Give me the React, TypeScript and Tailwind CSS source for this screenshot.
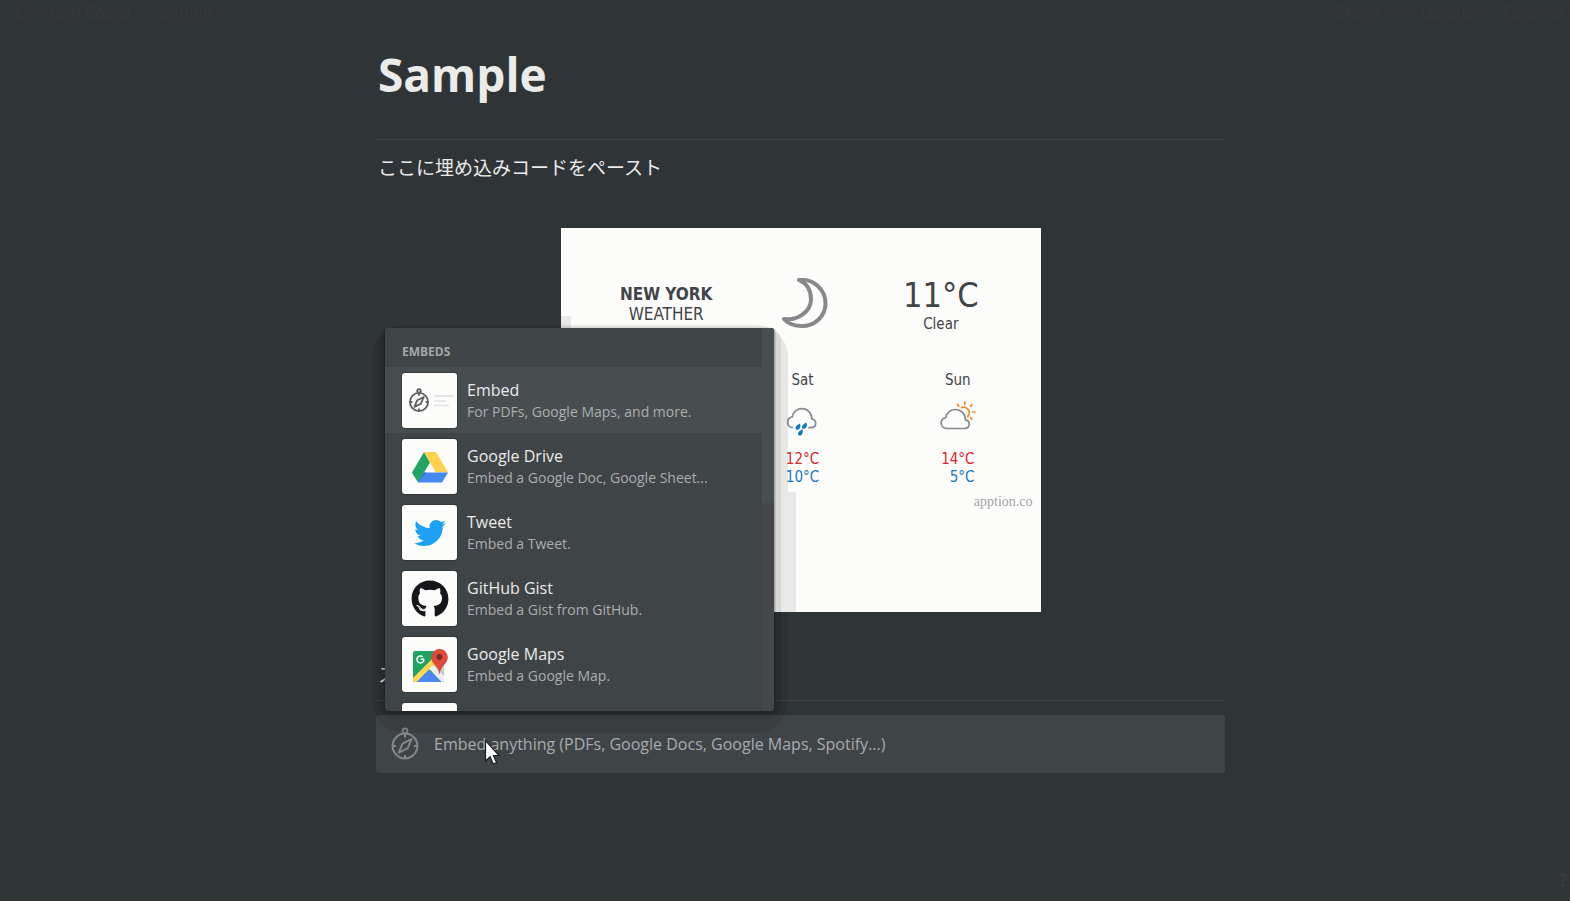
import type { ReactNode } from "react";
import { FaGithub, FaTwitter } from "react-icons/fa";
import { Check, Star } from "lucide-react";

function Compass({ className }: { className: string }) {
  return (
    <svg viewBox="0 0 30 34" className={className} fill="none" stroke="currentColor">
      <circle cx="15" cy="19" r="12.4" />
      <circle cx="15" cy="3.8" r="2.4" />
      <path d="M15 7v3.5M15 28v3.5M2.5 19H6M24 19h3.5" />
      <path d="M21.5 12.2 12.6 16.6 8.8 25.6 17.6 21.4Z" strokeLinejoin="round" />
    </svg>
  );
}

function EmbedPreview() {
  return (
    <div className="flex items-center gap-1 pl-[2px]">
      <Compass className="h-[25px] w-[22px] stroke-[2.5] text-[#5d6063]" />
      <svg viewBox="0 0 20 14" className="h-[14px] w-[20px]" fill="none" stroke="#dcdcdc">
        <path d="M0 2h20" strokeWidth="1.3" />
        <path d="M0 7h12M0 11.5h15" strokeWidth="1.6" stroke="#e2e2e2" />
      </svg>
    </div>
  );
}

function Drive() {
  return (
    <svg viewBox="0 0 36 32" className="h-[32px] w-[36px]">
      <path d="M12 1 18 11.5 6 31.5 0 21.5Z" fill="#1fa463" />
      <path d="M12 1h12l12 20.5H24Z" fill="#ffd14d" />
      <path d="M12 21.5h24l-6 10H6Z" fill="#4688f4" />
      <path d="M12 21.5 6 31.5 14.5 21.5Z" fill="#3567d6" />
    </svg>
  );
}

function Maps() {
  return (
    <svg viewBox="0 0 36 36" className="h-[36px] w-[36px]">
      <defs>
        <clipPath id="sheet">
          <rect x="1" y="4" width="31" height="31" rx="2" />
        </clipPath>
      </defs>
      <g clipPath="url(#sheet)">
        <rect x="1" y="4" width="31" height="31" fill="#1ea362" />
        <path d="M32 10v25L18 20Z" fill="#c9c9c9" />
        <path d="M-1 33 24 8l4 5L4 37Z" fill="#ffd84f" />
        <path d="M17 21.5 21 18 35 32v6h-3Z" fill="#eeeeee" />
        <path d="M4.5 35 17 22.5 29.500 35Z" fill="#4a89f3" />
      </g>
      <path d="M12 12.2H8.6M11.9 12.2a3.5 3.5 0 1 1-1.1-2.3" fill="none" stroke="#fff" strokeWidth="1.5" />
      <path d="M27.5 2a8.3 8.3 0 0 1 8.3 8.3c0 7.200-7.200 7.700-8.300 17.700-1.100-10-8.300-10.500-8.300-17.700A8.300 8.300 0 0 1 27.500 2Z" fill="#dc4b3e" />
      <circle cx="27.5" cy="10" r="3" fill="#7f2a22" />
    </svg>
  );
}

type Entry = { title: string; note: string; icon: ReactNode };

const entries: Entry[] = [
  { title: "Embed", note: "For PDFs, Google Maps, and more.", icon: <EmbedPreview /> },
  { title: "Google Drive", note: "Embed a Google Doc, Google Sheet...", icon: <Drive /> },
  { title: "Tweet", note: "Embed a Tweet.", icon: <FaTwitter className="size-8 text-[#1da1f2]" /> },
  { title: "GitHub Gist", note: "Embed a Gist from GitHub.", icon: <FaGithub className="size-[38px] text-[#17161a]" /> },
  { title: "Google Maps", note: "Embed a Google Map.", icon: <Maps /> },
];

function Thumb({ children }: { children?: ReactNode }) {
  return (
    <span className="flex size-[55px] shrink-0 items-center justify-center rounded-[3px] bg-[#fcfcfa] shadow-[0_0_0_1px_rgba(15,15,15,0.25)]">
      {children}
    </span>
  );
}

function EmbedMenu() {
  return (
    <>
      <div className="absolute bottom-[40px] -left-1 h-[408px] w-[416px] rounded-[32px] bg-black/8" />
      <div className="absolute bottom-[54px] left-[3px] h-[392px] w-[402px] rounded-[14px] bg-black/7" />
      <div className="absolute bottom-full left-[9px] z-10 mb-1 flex h-[383px] w-[389px] overflow-hidden rounded-[3px] bg-[#3f4447] shadow-[0_1px_0_1px_rgba(15,15,15,0.16),0_2px_0_2px_rgba(15,15,15,0.10)]">
        <div className="min-w-0 flex-1">
          <h2 className="h-[39px] pt-[14px] pl-[17px] text-[12px] leading-5 font-bold text-[#a5a7a8]">EMBEDS</h2>
          <ul>
            {entries.map((e, i) => (
              <li key={e.title}>
                <button
                  type="button"
                  className={`flex h-[66px] w-full items-center gap-[10px] pt-px pl-[17px] text-left ${i === 0 ? "bg-[#484d50]" : ""}`}
                >
                  <Thumb>{e.icon}</Thumb>
                  <span className="min-w-0">
                    <span className="block text-[16px] leading-[22px] text-[#ebebea]">{e.title}</span>
                    <span className="block text-[14px] leading-[22px] whitespace-nowrap text-[#abadae]">{e.note}</span>
                  </span>
                </button>
              </li>
            ))}
            <li className="flex h-[66px] items-center pt-px pl-[17px]">
              <Thumb />
            </li>
          </ul>
        </div>
        <div className="w-3 bg-[#44484b]">
          <div className="h-[175px] bg-[#484d50]" />
        </div>
      </div>
    </>
  );
}

function Rain() {
  return (
    <svg viewBox="0 0 36 36" className="h-[36px] w-[36px]" fill="none">
      <path
        d="M8.500 27.500C5.500 27.500 3.700 24.900 3.700 22.200c0-3 2-5 4.600-5.400C9 12 13 8.700 18 8.700c5.500 0 9.800 4.300 9.900 10.300 2.700.4 3.800 2.300 3.800 4.300 0 2.500-1.800 4.400-4.700 4.400h-2"
        stroke="#8a8b8e"
        strokeWidth="1.700"
        strokeLinecap="round"
      />
      <g fill="#0b79c8">
        <path d="M16 23.500c1 3.500-.6 6.300-2.600 6.300-2.700 0-3-3.800 2.600-6.300Z" />
        <path d="M22.500 22.500c1 3.500-.6 6.300-2.600 6.300-2.700 0-3-3.800 2.600-6.300Z" />
        <path d="M18.500 29.200c1 3.500-.6 6.300-2.600 6.300-2.700 0-3-3.800 2.600-6.300Z" />
      </g>
    </svg>
  );
}

function PartlyCloudy() {
  return (
    <svg viewBox="0 0 36 36" className="h-[36px] w-[36px]" fill="none" strokeLinecap="round" strokeWidth="1.700">
      <path
        d="M6.800 28.500C3 28.500 1.200 25.800 1.200 23c0-3 2-5 4.600-5.400C6.500 12.800 10.500 9.500 15.500 9.500c5.500 0 9.800 4.300 9.900 10.300 2.700.4 3.800 2.300 3.800 4.300 0 2.500-1.800 4.400-4.700 4.400Z"
        stroke="#8a8b8e"
      />
      <path
        d="M21.500 7.600a5.600 5.600 0 0 1 6 9.200M24.800 2v2.300M17.300 4.300l1.500 1.800M32 4.600l-1.600 1.700M32.600 12h2.300M30.300 17.500l1.600 1.600"
        stroke="#f08a35"
      />
    </svg>
  );
}

function Day({ name, icon, high, low }: { name: string; icon: ReactNode; high: string; low: string }) {
  return (
    <div className="flex flex-col items-center">
      <p className="text-[15px] leading-5">{name}</p>
      <div className="mt-[10px]">{icon}</div>
      <div className="mt-[14px] text-right text-[15px] leading-[18px]">
        <p className="text-[#d9262c]">{high}</p>
        <p className="text-[#1878be]">{low}</p>
      </div>
    </div>
  );
}

function WeatherCard() {
  return (
    <section className="relative mx-auto mt-[46px] h-[384px] w-[480px] bg-[#fcfcfa] pt-[50px] font-['DejaVu_Sans_Condensed','DejaVu_Sans',sans-serif] text-[#414447]">
      <div className="absolute top-[88px] left-0 h-3 w-[10px] bg-[#eae8ea]" />
      <div className="absolute bottom-0 left-[227px] h-[120px] w-2 bg-[#e8e8e8]" />
      <div className="flex pr-[32px] pl-[38px] text-center">
        <div className="flex-1 pt-[6px]">
          <p className="text-[17px] leading-5 font-bold">NEW YORK</p>
          <p className="text-[17px] leading-5">WEATHER</p>
        </div>
        <div className="flex-1 pl-1">
          <svg viewBox="0 0 46 50" className="mx-auto h-[50px] w-[46px]" fill="none" stroke="#87888b" strokeWidth="4" strokeLinejoin="round">
            <path d="M17 2C31 .5 43.500 11 43.500 25.500 43.500 38 33 48 20 48 12.500 48 6 45.500 2 41 15 43 29 34 29 21 29 12 25 5.500 17 2Z" />
          </svg>
        </div>
        <div className="flex-1">
          <p className="text-[34px] leading-[34px]">11°C</p>
          <p className="mt-[2px] text-[15px] leading-5">Clear</p>
        </div>
      </div>
      <div className="mt-[36px] grid grid-cols-3 pr-[5px] pl-[9px]">
        <div />
        <Day name="Sat" icon={<Rain />} high="12°C" low="10°C" />
        <Day name="Sun" icon={<PartlyCloudy />} high="14°C" low="5°C" />
      </div>
      <p className="mt-[6px] pr-2 text-right font-['Liberation_Serif',serif] text-[14px] leading-5 text-[#9fa3aa]">apption.co</p>
    </section>
  );
}

function Pointer() {
  return (
    <svg viewBox="0 0 16 26" className="absolute top-[24px] left-[108px] z-20 h-[26px] w-[16px]">
      <path d="M1.500 1.500v20.500l4.600-4.300 3.200 7.300 3.300-1.400-3.200-7.100h5.600Z" fill="#fff" stroke="#1d1f21" strokeWidth="1.200" />
    </svg>
  );
}

export default function App() {
  return (
    <div className="relative min-h-screen bg-[#2f3437] font-['Open_Sans','Noto_Sans_CJK_JP',sans-serif] text-[#ebebea]">
      <header className="flex h-6 items-center justify-between px-[7px] text-[16px] leading-6 text-[#37383d]">
        <nav className="flex items-center">
          <Star className="ml-[6px] size-[20px]" strokeWidth={1.5} />
          <a href="#dashboard" className="ml-[10px]">Dash Board</a>
          <a href="#sample" className="ml-[26px]">Sample</a>
        </nav>
        <div className="flex items-center">
          <button type="button">Share</button>
          <button type="button" className="ml-4 flex items-center gap-2"><Check className="size-[17px]" />Updates</button>
          <button type="button" className="ml-5">Favorite</button>
        </div>
      </header>
      <main className="mx-auto max-w-[880px] pt-[22px] pl-[31px]">
        <h1 className="pl-[2px] text-[46px] leading-[56px] font-bold text-[#ebebea]">Sample</h1>
        <hr className="mt-[37px] border-[#404447]" />
        <p className="mt-[14px] pl-[2px] text-[19px] leading-7">ここに埋め込みコードをペースト</p>
        <WeatherCard />
        <p className="mt-[49px] pl-[2px] text-[19px] leading-7">ス</p>
        <hr className="mt-[11px] border-[#404447]" />
        <div className="relative mt-[14px]">
          <button type="button" className="flex h-[58px] w-full items-center rounded-[3px] bg-[#3f4447] pl-[14px] text-left text-[16px] text-[#a9abac]">
            <Compass className="mr-[14px] h-[34px] w-[30px] stroke-2 text-[#85888a]" />
            Embed anything (PDFs, Google Docs, Google Maps, Spotify...)
          </button>
          <EmbedMenu />
          <Pointer />
        </div>
      </main>
      <button type="button" aria-label="Help" className="absolute right-[2px] bottom-[7px] text-[20px] leading-7 font-bold text-[#363a3d]">?</button>
    </div>
  );
}
